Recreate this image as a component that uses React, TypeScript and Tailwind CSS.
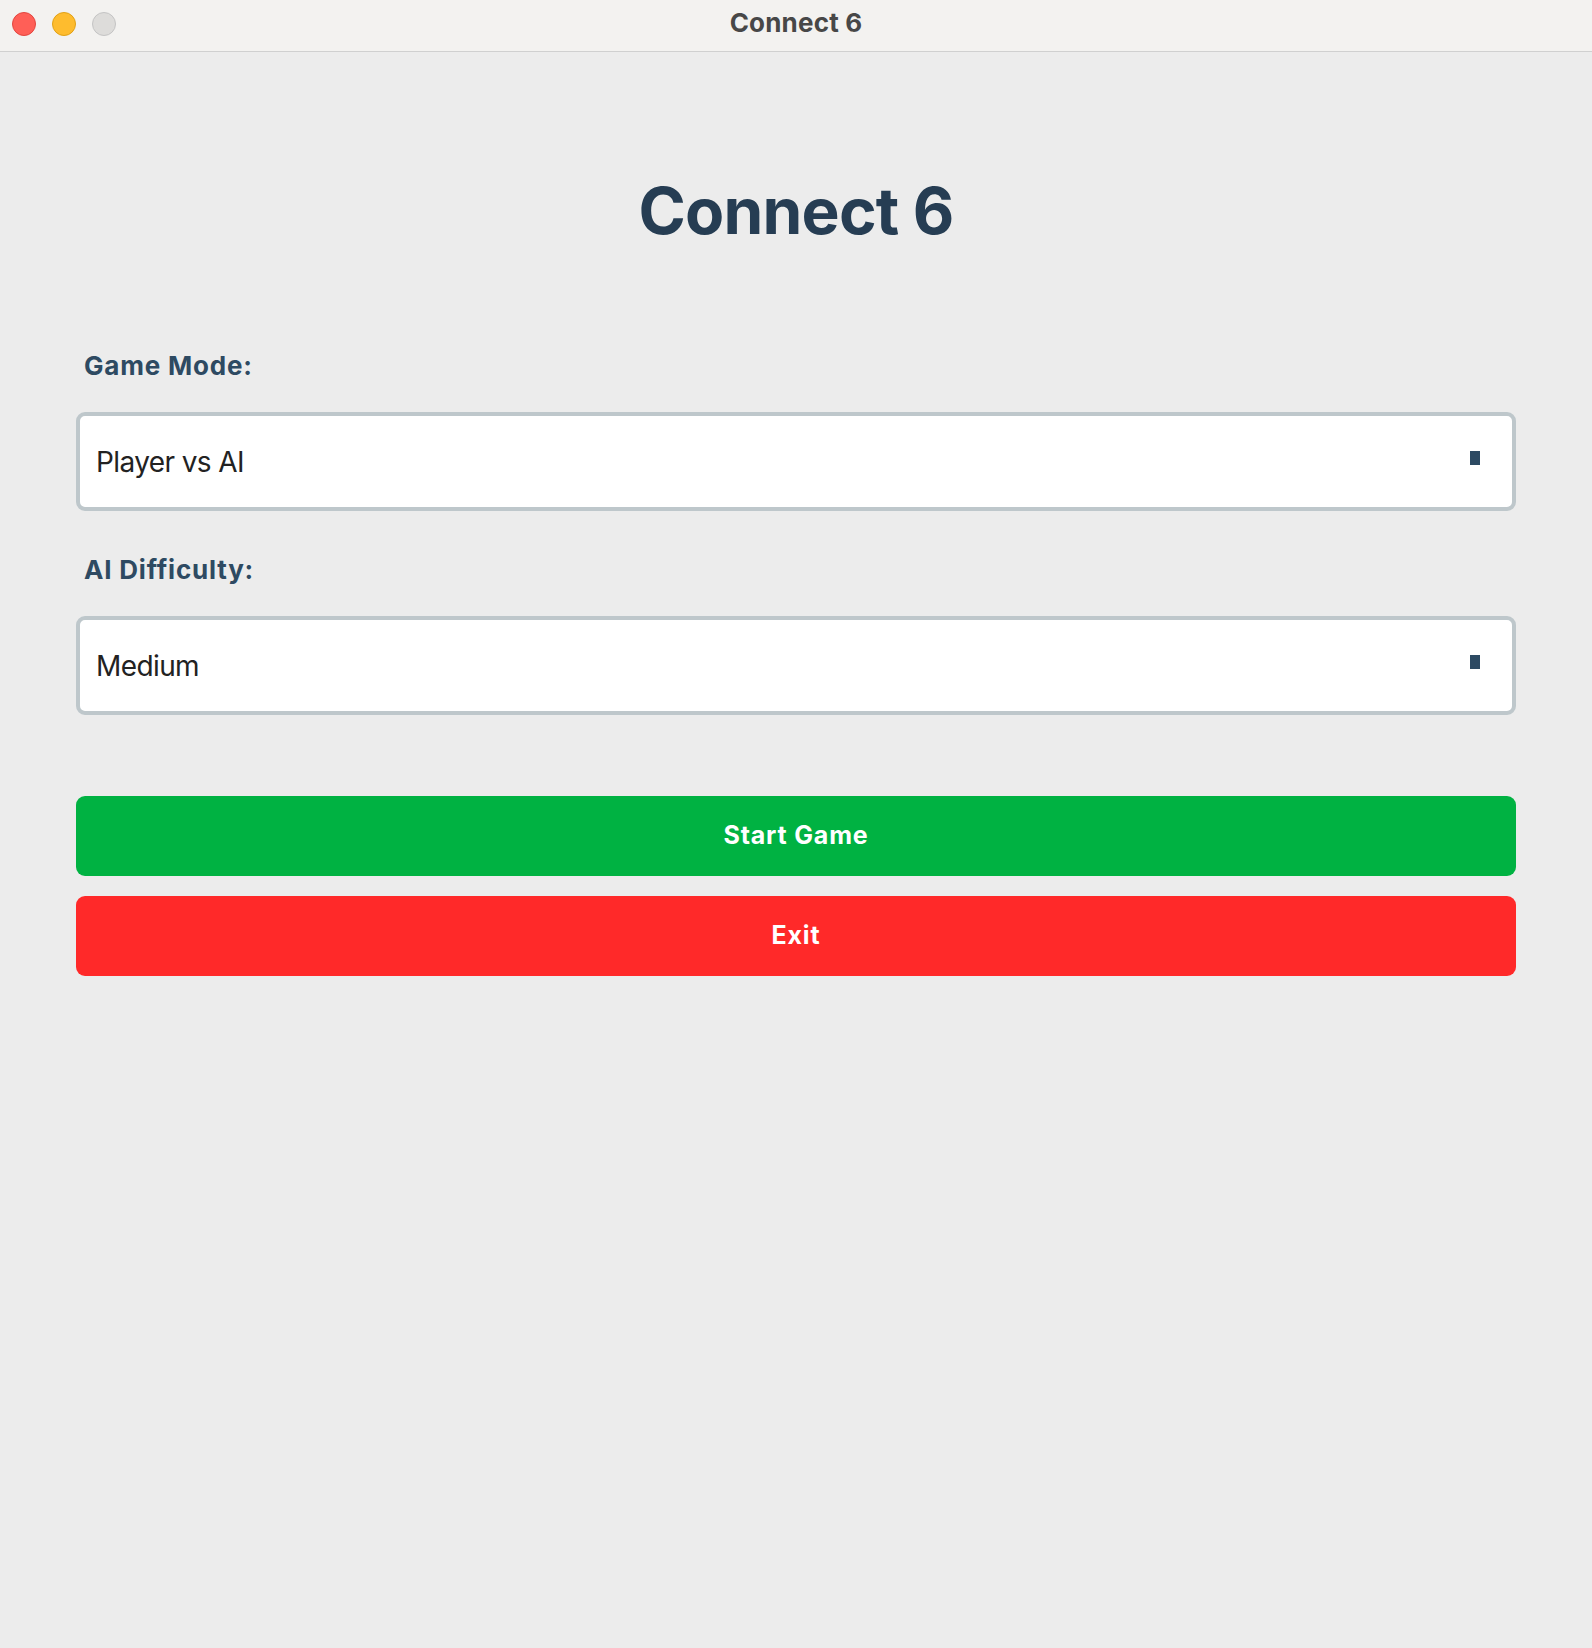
const font = { fontFamily: 'Inter, "Liberation Sans", sans-serif' };

function TrafficLights() {
  return (
    <div className="flex items-center gap-[16px] pb-[4px] pl-[12px]">
      <span className="h-[24px] w-[24px] rounded-full border border-[#e2463f] bg-[#ff5f57]" />
      <span className="h-[24px] w-[24px] rounded-full border border-[#e1a116] bg-[#febc2e]" />
      <span className="h-[24px] w-[24px] rounded-full border border-[#c4c4c4] bg-[#dddcda]" />
    </div>
  );
}

interface SelectBoxProps {
  label: string;
  value: string;
}

function SelectBox({ label, value }: SelectBoxProps) {
  return (
    <div className="flex flex-col">
      <div className="pl-[8px] text-[26px] font-bold leading-none tracking-[0.8px] text-[#2e4a62]">{label}</div>
      <div className="mt-[33px] flex h-[99px] items-center justify-between rounded-[9px] border-4 border-[#bec7cb] bg-white pl-[16px] pr-[32px]">
        <span className="text-[28px] leading-none tracking-[-0.6px] text-[#222222]">{value}</span>
        <span className="mb-[8px] h-[14px] w-[10px] bg-[#2d4a63]" />
      </div>
    </div>
  );
}

export default function App() {
  return (
    <div className="flex h-[1648px] w-full flex-col bg-[#ececec]" style={font}>
      {/* Window chrome */}
      <div className="grid h-[52px] grid-cols-[1fr_auto_1fr] items-center border-b border-[#d0d0d0] bg-[#f3f2f0]">
        <TrafficLights />
        <div className="pb-[6px] text-[26px] font-bold tracking-[0.2px] text-[#474747]">Connect 6</div>
        <div />
      </div>

      <div className="flex flex-col px-[76px] pt-[127px]">
        <h1 className="text-center text-[64px] font-bold leading-none tracking-[-0.8px] text-[#263d53]">Connect 6</h1>

        <div className="mt-[110px] flex flex-col gap-[46px]">
          <SelectBox label="Game Mode:" value="Player vs AI" />
          <SelectBox label="AI Difficulty:" value="Medium" />
        </div>

        <div className="mt-[81px] flex flex-col gap-[20px]">
          <button className="h-[80px] rounded-[9px] bg-[#00b242] text-[25px] font-bold tracking-[0.8px] text-white">
            Start Game
          </button>
          <button className="h-[80px] rounded-[9px] bg-[#ff2929] text-[25px] font-bold tracking-[0.8px] text-white">
            Exit
          </button>
        </div>
      </div>
    </div>
  );
}
